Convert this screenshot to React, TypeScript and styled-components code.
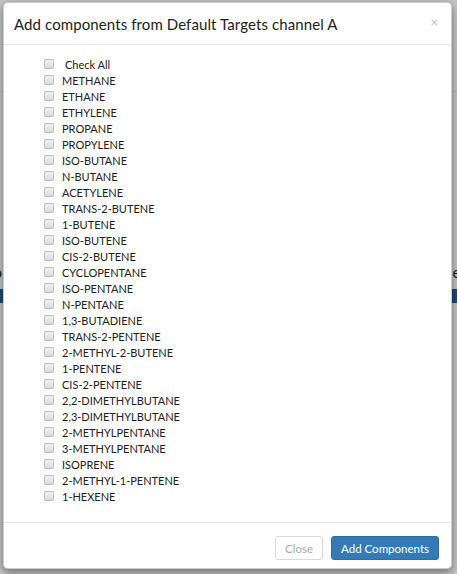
import * as React from 'react'
import styled, {createGlobalStyle} from 'styled-components'

const GlobalStyle = createGlobalStyle`
  html, body {
    margin: 0;
    padding: 0;
    background: #c4c4c4;
    font-family: 'Lato', 'Liberation Sans', sans-serif;
  }
`

const Page = styled.div`
  width: 457px;
  height: 574px;
  overflow: hidden;
  position: relative;
  background: #c4c4c4;
`

const PageRule = styled.div`
  height: 91px;
  border-bottom: 1px solid #b4b4b4;
`

const PageRow = styled.div`
  display: flex;
  justify-content: space-between;
  margin-top: 170px;
  font-size: 16px;
  color: #222;
`

const PageEdgeText = styled.span<{$side: 'left' | 'right'}>`
  margin-left: ${p => (p.$side === 'left' ? '-7px' : '0')};
  margin-right: ${p => (p.$side === 'right' ? '-4px' : '0')};
`

const PageButtons = styled.div`
  display: flex;
  justify-content: space-between;
  margin-top: 8px;
`

const PageButton = styled.div`
  width: 60px;
  height: 14px;
  background: #1e4a73;
`

const Modal = styled.div`
  position: absolute;
  top: 2px;
  left: 3px;
  width: 449px;
  box-sizing: border-box;
  background: #fff;
  border: 1px solid rgba(0, 0, 0, 0.2);
  border-radius: 5px;
  box-shadow: 0 3px 9px rgba(0, 0, 0, 0.45);
`

const Header = styled.div`
  display: flex;
  align-items: center;
  justify-content: space-between;
  padding: 10px 13px 9px 10px;
  border-bottom: 1px solid #e5e5e5;
`

const Title = styled.h4`
  margin: 0;
  font-size: 15px;
  line-height: 22px;
  font-weight: 400;
  letter-spacing: 0.1px;
  color: #222;
`

const CloseX = styled.span`
  font-size: 13px;
  font-weight: 700;
  color: #cfcfcf;
  line-height: 1;
  margin-top: -4px;
`

const Body = styled.div`
  padding: 11px 15px 18px 40px;
`

const Row = styled.label`
  display: flex;
  align-items: center;
  height: 16px;
  font-size: 11px;
  color: #222;
`

const Box = styled.span`
  width: 8px;
  height: 8px;
  margin-right: 8px;
  border: 1px solid #bdbdbd;
  border-radius: 2px;
  background: linear-gradient(#f2f2f2, #dcdcdc);
  flex: none;
`

const Label = styled.span<{$indent?: boolean}>`
  padding-left: ${p => (p.$indent ? '3px' : '0')};
`

const Footer = styled.div`
  display: flex;
  justify-content: flex-end;
  gap: 8px;
  padding: 13px 12px 8px;
  border-top: 1px solid #e5e5e5;
`

const Button = styled.button<{$primary?: boolean}>`
  height: 24px;
  padding: 0 9px;
  font-family: inherit;
  font-size: 11.5px;
  border-radius: 3px;
  border: 1px solid ${p => (p.$primary ? '#2e6da4' : '#d9d9d9')};
  background: ${p => (p.$primary ? '#337ab7' : '#fff')};
  color: ${p => (p.$primary ? '#fff' : '#aaa')};
  cursor: ${p => (p.$primary ? 'pointer' : 'not-allowed')};
`

const components = [
  'METHANE', 'ETHANE', 'ETHYLENE', 'PROPANE', 'PROPYLENE', 'ISO-BUTANE',
  'N-BUTANE', 'ACETYLENE', 'TRANS-2-BUTENE', '1-BUTENE', 'ISO-BUTENE',
  'CIS-2-BUTENE', 'CYCLOPENTANE', 'ISO-PENTANE', 'N-PENTANE', '1,3-BUTADIENE',
  'TRANS-2-PENTENE', '2-METHYL-2-BUTENE', '1-PENTENE', 'CIS-2-PENTENE',
  '2,2-DIMETHYLBUTANE', '2,3-DIMETHYLBUTANE', '2-METHYLPENTANE',
  '3-METHYLPENTANE', 'ISOPRENE', '2-METHYL-1-PENTENE', '1-HEXENE',
]

export default function App() {
  return (
    <Page>
      <GlobalStyle />
      <PageRule />
      <PageRow>
        <PageEdgeText $side='left'>o</PageEdgeText>
        <PageEdgeText $side='right'>e</PageEdgeText>
      </PageRow>
      <PageButtons>
        <PageButton />
        <PageButton />
      </PageButtons>

      <Modal role='dialog'>
        <Header>
          <Title>Add components from Default Targets channel A</Title>
          <CloseX>×</CloseX>
        </Header>
        <Body>
          <Row>
            <Box />
            <Label $indent>Check All</Label>
          </Row>
          {components.map(name => (
            <Row key={name}>
              <Box />
              <Label>{name}</Label>
            </Row>
          ))}
        </Body>
        <Footer>
          <Button disabled>Close</Button>
          <Button $primary>Add Components</Button>
        </Footer>
      </Modal>
    </Page>
  )
}
